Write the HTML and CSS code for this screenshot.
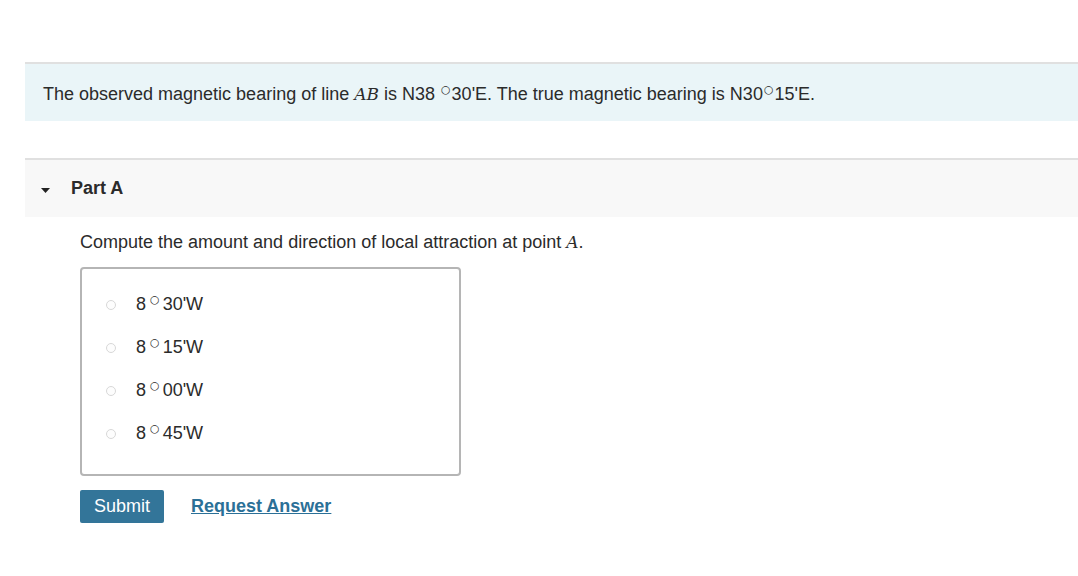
FILE: index.html
```html
<!DOCTYPE html>
<html>
<head>
<meta charset="utf-8">
<link rel="stylesheet" href="styles.css">
</head>
<body>
<div class="page">
  <div class="intro">
    <p>The observed magnetic bearing of line <span class="math">AB</span> is N38 <span class="deg">○</span>30'E. The true magnetic bearing is N30<span class="deg">○</span>15'E.</p>
  </div>
  <div class="part">
    <div class="part-head">
      <svg class="caret" width="9" height="5" viewBox="0 0 9 5"><path d="M0 0 L9 0 L4.5 5 Z" fill="#222"/></svg>
      <span class="part-title">Part A</span>
    </div>
    <div class="part-body">
      <p class="question">Compute the amount and direction of local attraction at point <span class="math">A</span>.</p>
      <div class="options">
        <label class="option"><span class="radio"></span><span>8<span class="deg wide">○</span>30'W</span></label>
        <label class="option"><span class="radio"></span><span>8<span class="deg wide">○</span>15'W</span></label>
        <label class="option"><span class="radio"></span><span>8<span class="deg wide">○</span>00'W</span></label>
        <label class="option"><span class="radio"></span><span>8<span class="deg wide">○</span>45'W</span></label>
      </div>
      <div class="actions">
        <button class="submit">Submit</button>
        <a class="request" href="#">Request Answer</a>
      </div>
    </div>
  </div>
</div>
</body>
</html>
```
FILE: styles.css
```css
html, body {
  margin: 0;
  padding: 0;
  background: #fff;
}
body {
  font-family: "Liberation Sans", Arial, Helvetica, sans-serif;
  font-size: 18px;
  color: #2b2b2b;
}
.page {
  padding-top: 62px;
  padding-left: 25px;
}
.intro {
  border-top: 2px solid #e0e0e0;
  background: #eaf5f8;
  height: 57px;
  display: flex;
  align-items: center;
  padding-left: 18px;
}
.intro p {
  margin: 0;
  padding-top: 3px;
}
.math {
  font-family: "DejaVu Serif", "Liberation Serif", serif;
  font-style: italic;
  font-size: 17px;
}
.deg {
  display: inline-block;
  font-family: "DejaVu Sans", sans-serif;
  font-size: 11px;
  line-height: 0;
  position: relative;
  top: -7px;
  margin: 0 1px 0 1px;
}
.deg.wide {
  margin: 0 3px 0 4px;
}
.part {
  margin-top: 37px;
}
.part-head {
  border-top: 2px solid #e0e0e0;
  background: #f8f8f8;
  height: 57px;
  display: flex;
  align-items: center;
  padding-left: 16px;
}
.caret {
  margin-right: 21px;
  margin-top: 3px;
}
.part-title {
  font-weight: bold;
}
.part-body {
  padding-left: 55px;
}
.question {
  margin: 15px 0 0 0;
}
.options {
  margin-top: 14px;
  width: 377px;
  height: 205px;
  border: 2px solid #b5b5b5;
  border-radius: 4px;
  box-sizing: content-box;
  display: flex;
  flex-direction: column;
}
.option {
  display: flex;
  align-items: center;
  height: 43px;
  padding-left: 24px;
}
.option:first-child {
  margin-top: 14px;
}
.radio {
  width: 8px;
  height: 8px;
  border: 1px solid #d8d8d8;
  border-radius: 50%;
  margin-right: 20px;
  background: #fdfdfd;
}
.actions {
  margin-top: 14px;
  display: flex;
  align-items: center;
}
.submit {
  background: #337599;
  color: #fff;
  border: none;
  border-radius: 2px;
  font-family: "Liberation Sans", Arial, sans-serif;
  font-size: 18px;
  width: 84px;
  height: 33px;
  padding: 0;
}
.request {
  margin-left: 27px;
  color: #2b7097;
  font-weight: bold;
  font-size: 18px;
  text-decoration: underline;
}
```
